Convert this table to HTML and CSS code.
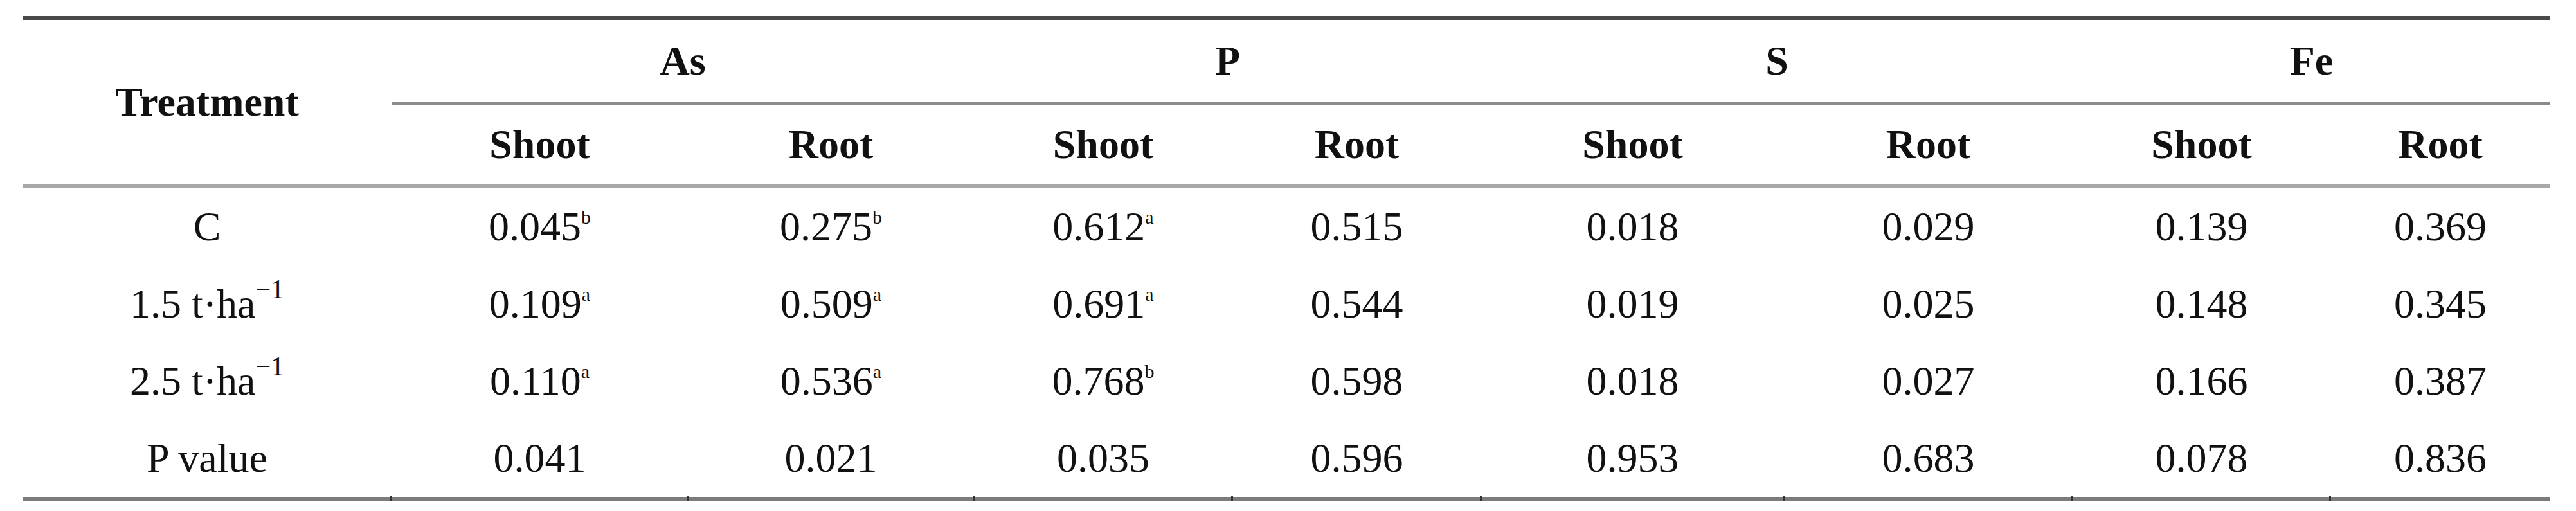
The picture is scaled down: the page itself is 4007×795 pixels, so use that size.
FILE: index.html
```html
<!DOCTYPE html>
<html lang="en">
<head>
  <meta charset="UTF-8" />
  <meta name="viewport" content="width=device-width, initial-scale=1.0"/>
  <title>Element content by treatment</title>
  <link rel="stylesheet" href="styles.css">
</head>
<body>
  <table class="data-table">
    <colgroup>
      <col class="w-treat">
      <col class="w-as-shoot">
      <col class="w-as-root">
      <col class="w-p-shoot">
      <col class="w-p-root">
      <col class="w-s-shoot">
      <col class="w-s-root">
      <col class="w-fe-shoot">
      <col class="w-fe-root">
    </colgroup>
    <thead>
      <tr class="group-row">
        <th rowspan="2" class="treat-head">Treatment</th>
        <th colspan="2" class="group">As</th>
        <th colspan="2" class="group">P</th>
        <th colspan="2" class="group">S</th>
        <th colspan="2" class="group">Fe</th>
      </tr>
      <tr class="part-row">
        <th>Shoot</th>
        <th>Root</th>
        <th>Shoot</th>
        <th>Root</th>
        <th>Shoot</th>
        <th>Root</th>
        <th>Shoot</th>
        <th>Root</th>
      </tr>
    </thead>
    <tbody>
      <tr>
        <td>C</td>
        <td>0.045<sup class="mark">b</sup></td>
        <td>0.275<sup class="mark">b</sup></td>
        <td>0.612<sup class="mark">a</sup></td>
        <td>0.515</td>
        <td>0.018</td>
        <td>0.029</td>
        <td>0.139</td>
        <td>0.369</td>
      </tr>
      <tr>
        <td>1.5 t·ha<sup class="unit">−1</sup></td>
        <td>0.109<sup class="mark">a</sup></td>
        <td>0.509<sup class="mark">a</sup></td>
        <td>0.691<sup class="mark">a</sup></td>
        <td>0.544</td>
        <td>0.019</td>
        <td>0.025</td>
        <td>0.148</td>
        <td>0.345</td>
      </tr>
      <tr>
        <td>2.5 t·ha<sup class="unit">−1</sup></td>
        <td>0.110<sup class="mark">a</sup></td>
        <td>0.536<sup class="mark">a</sup></td>
        <td>0.768<sup class="mark">b</sup></td>
        <td>0.598</td>
        <td>0.018</td>
        <td>0.027</td>
        <td>0.166</td>
        <td>0.387</td>
      </tr>
      <tr class="last-row">
        <td>P value</td>
        <td>0.041</td>
        <td>0.021</td>
        <td>0.035</td>
        <td>0.596</td>
        <td>0.953</td>
        <td>0.683</td>
        <td>0.078</td>
        <td>0.836</td>
      </tr>
    </tbody>
  </table>
</body>
</html>
```

FILE: styles.css
```css
body {
  margin: 0;
  background: #fff;
  color: #111;
  font-family: "Liberation Serif", "Times New Roman", serif;
}

.data-table {
  border-collapse: collapse;
  table-layout: fixed;
  width: 3932px;
  margin: 25px 0 0 35px;
  font-size: 64px;
}

.data-table th,
.data-table td {
  padding: 0;
  text-align: center;
  vertical-align: middle;
}

/* column widths */
.w-treat { width: 574px; }
.w-as-shoot { width: 461px; }
.w-as-root { width: 445px; }
.w-p-shoot { width: 402px; }
.w-p-root { width: 387px; }
.w-s-shoot { width: 471px; }
.w-s-root { width: 449px; }
.w-fe-shoot { width: 401px; }
.w-fe-root { width: 342px; }

/* header rules */
.group-row th {
  height: 128px;
  border-top: 6px solid #4a4a4a;
}

.group-row .group {
  border-bottom: 4px solid #8c8c8c;
}

.part-row th {
  height: 124px;
  border-bottom: 6px solid #a8a8a8;
}

.treat-head {
  border-bottom: 6px solid #a8a8a8;
}

tbody td {
  height: 120px;
  padding-top: 8px;
}

.last-row td {
  border-bottom: 6px solid #7b7b7b;
  position: relative;
}

/* little ticks where the cell borders meet the bottom rule */
.last-row td + td::before {
  content: "";
  position: absolute;
  left: -2px;
  bottom: -6px;
  width: 3px;
  height: 7px;
  background: #333;
}

.mark {
  font-size: 30px;
  line-height: 0;
  vertical-align: 26px;
}

.unit {
  font-size: 42px;
  line-height: 0;
  vertical-align: 30px;
}
```
